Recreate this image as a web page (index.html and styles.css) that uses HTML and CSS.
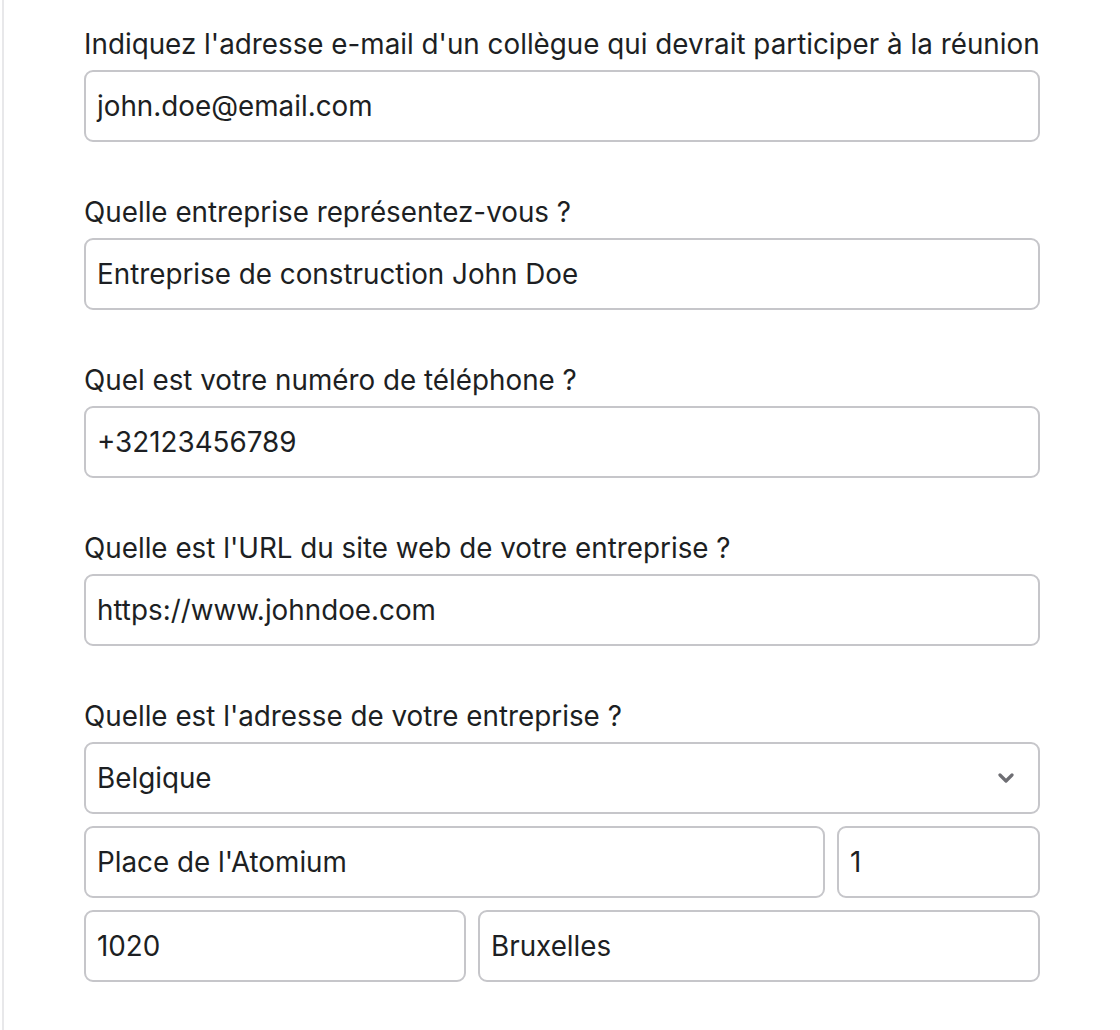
FILE: index.html
```html
<!DOCTYPE html>
<html lang="fr">
<head>
<meta charset="utf-8">
<title>Formulaire</title>
<link rel="stylesheet" href="styles.css">
</head>
<body>
<div class="page">
  <form class="form">
    <div class="field">
      <label class="label">Indiquez l'adresse e-mail d'un collègue qui devrait participer à la réunion</label>
      <div class="input">john.doe@email.com</div>
    </div>
    <div class="field">
      <label class="label">Quelle entreprise représentez-vous ?</label>
      <div class="input">Entreprise de construction John Doe</div>
    </div>
    <div class="field">
      <label class="label">Quel est votre numéro de téléphone ?</label>
      <div class="input">+32123456789</div>
    </div>
    <div class="field">
      <label class="label">Quelle est l'URL du site web de votre entreprise ?</label>
      <div class="input">https://www.johndoe.com</div>
    </div>
    <div class="field">
      <label class="label">Quelle est l'adresse de votre entreprise ?</label>
      <div class="address">
        <div class="input select">
          <span>Belgique</span>
          <svg class="chevron" width="16" height="10" viewBox="0 0 16 10"><polyline points="2,2 8,8 14,2" fill="none" stroke="#6e6e73" stroke-width="3.2" stroke-linecap="round" stroke-linejoin="round"/></svg>
        </div>
        <div class="row row-street">
          <div class="input">Place de l'Atomium</div>
          <div class="input">1</div>
        </div>
        <div class="row row-city">
          <div class="input">1020</div>
          <div class="input">Bruxelles</div>
        </div>
      </div>
    </div>
  </form>
</div>
</body>
</html>
```

FILE: styles.css
```css
html, body {
  margin: 0;
  padding: 0;
  background: #ffffff;
}
body {
  font-family: Inter, "Noto Sans", "Liberation Sans", sans-serif;
  color: #1d1f23;
}
.page {
  margin-left: 2px;
  border-left: 2px solid #e8e8ea;
  min-height: 1030px;
  padding: 28px 0 0 80px;
  box-sizing: border-box;
}
.form {
  width: 956px;
  display: flex;
  flex-direction: column;
  gap: 54px;
}
.field {
  display: flex;
  flex-direction: column;
  gap: 10px;
}
.label {
  font-size: 27.8px;
  line-height: 32px;
  display: block;
  white-space: nowrap;
}
.input {
  box-sizing: border-box;
  height: 72px;
  border: 2px solid #c6c6ca;
  border-radius: 9px;
  padding: 0 11px;
  font-size: 27.8px;
  display: flex;
  align-items: center;
  background: #fff;
}
.select {
  justify-content: space-between;
  padding-right: 24px;
}
.chevron {
  display: block;
}
.address {
  display: flex;
  flex-direction: column;
  gap: 12px;
}
.row {
  display: grid;
  gap: 12px;
}
.row-street {
  grid-template-columns: 1fr 203px;
}
.row-city {
  grid-template-columns: 382px 1fr;
}
```
